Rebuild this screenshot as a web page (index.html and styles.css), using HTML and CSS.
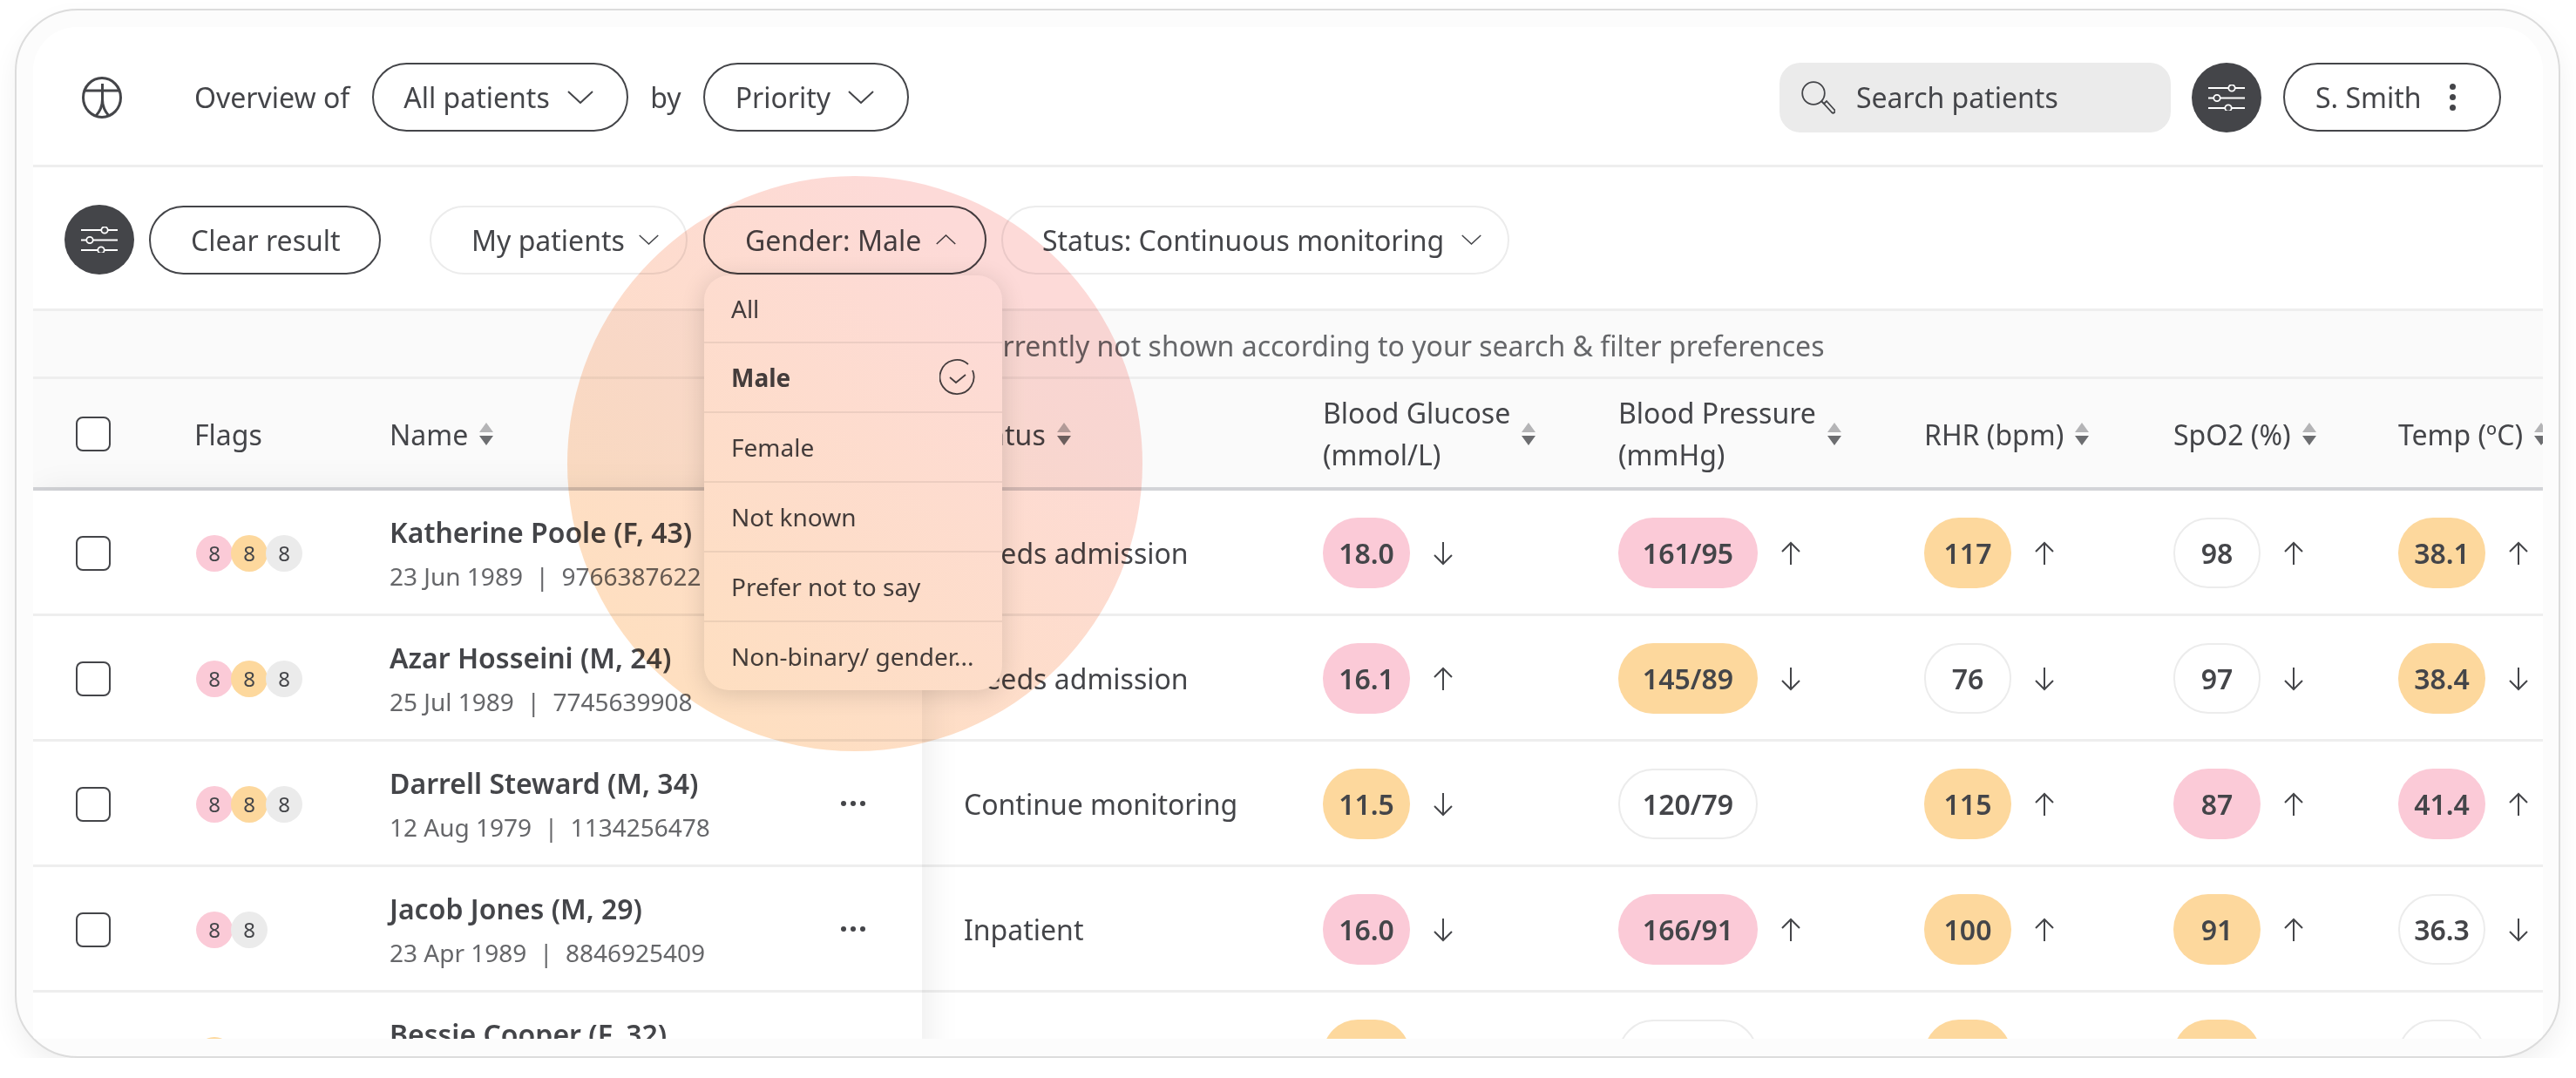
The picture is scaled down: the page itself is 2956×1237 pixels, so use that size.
FILE: index.html
```html
<!DOCTYPE html>
<html>
<head>
	<meta charset="UTF-8">
	<title>Overview</title>
	<link rel="stylesheet" href="styles.css">
</head>
<body>
	<svg class="defs" width="0" height="0">
		<symbol id="sliders" viewBox="0 0 42 30">
			<path d="M0 4h23M31 4h11M0 15.500h6M14 15.500h28M0 27h19M27 27h15" fill="none" stroke="#fff" stroke-width="1.800"/>
			<circle cx="27" cy="4" r="3.700" fill="none" stroke="#fff" stroke-width="1.800"/>
			<circle cx="10" cy="15.500" r="3.700" fill="none" stroke="#fff" stroke-width="1.800"/>
			<circle cx="23" cy="27" r="3.700" fill="none" stroke="#fff" stroke-width="1.800"/>
		</symbol>
		<symbol id="chev" viewBox="0 0 30 15">
			<path d="M1 1l14 13L29 1" fill="none" stroke="#444549" stroke-width="2"/>
		</symbol>
		<symbol id="up" viewBox="0 0 24 28">
			<path d="M12 27V2M2 12L12 2l10 10" fill="none" stroke="#444549" stroke-width="2"/>
		</symbol>
		<symbol id="down" viewBox="0 0 24 28">
			<path d="M12 1v25M2 16l10 10 10-10" fill="none" stroke="#444549" stroke-width="2"/>
		</symbol>
		<symbol id="sort" viewBox="0 0 16 26">
			<path d="M8 0l8 11H0z" fill="#b4b4b6"/>
			<path d="M0 15h16l-8 11z" fill="#6c6d70"/>
		</symbol>
	</svg>

	<div class="card">
		<div class="inner">
			<div class="topbar">
				<svg class="logo" viewBox="0 0 46 48">
					<ellipse cx="23" cy="24" rx="21.500" ry="22.500" fill="none" stroke="#444549" stroke-width="3"/>
					<path d="M23.500 8v18M2 16h42M23.500 26c0 8-3 14-7.500 19M23.500 26c0 8 3 14 7.500 19" fill="none" stroke="#444549" stroke-width="3"/>
				</svg>
				<span class="label overview">Overview of</span>
				<div class="pill pill-all">All patients <svg class="chev-lg"><use href="#chev"/></svg></div>
				<span class="label by">by</span>
				<div class="pill pill-priority">Priority <svg class="chev-lg"><use href="#chev"/></svg></div>
				<div class="search">
					<svg class="search-icon" viewBox="0 0 40 40">
						<circle cx="15" cy="15" r="12.800" fill="none" stroke="#444549" stroke-width="1.800"/>
						<path d="M24 24l3 3" fill="none" stroke="#444549" stroke-width="1.800"/>
						<path d="M27 27l3-3 9 10a2 2 0 0 1-3 3z" fill="none" stroke="#444549" stroke-width="1.800"/>
					</svg>
					Search patients
				</div>
				<div class="round"><svg class="sliders"><use href="#sliders"/></svg></div>
				<div class="pill pill-user">S. Smith
					<span class="dots"><i></i><i></i><i></i></span>
				</div>
			</div>

			<div class="filters">
				<div class="round"><svg class="sliders"><use href="#sliders"/></svg></div>
				<div class="pill pill-clear">Clear result</div>
				<div class="pill pill-light pill-mine">My patients <svg class="chev-sm"><use href="#chev"/></svg></div>
				<div class="pill pill-gender">Gender: Male <svg class="chev-sm chev-flip"><use href="#chev"/></svg></div>
				<div class="pill pill-light pill-status">Status: Continuous monitoring <svg class="chev-sm"><use href="#chev"/></svg></div>
			</div>

			<div class="notice">12 patients currently not shown according to your search &amp; filter preferences</div>

			<div class="table">
				<div class="cols head">
					<div><span class="check"></span></div>
					<div>Flags</div>
					<div class="th">Name <svg class="sort"><use href="#sort"/></svg></div>
					<div class="th">Status <svg class="sort"><use href="#sort"/></svg></div>
					<div class="th"><span class="two">Blood Glucose<br>(mmol/L)</span> <svg class="sort"><use href="#sort"/></svg></div>
					<div class="th"><span class="two">Blood Pressure<br>(mmHg)</span> <svg class="sort"><use href="#sort"/></svg></div>
					<div class="th">RHR (bpm) <svg class="sort"><use href="#sort"/></svg></div>
					<div class="th">SpO2 (%) <svg class="sort"><use href="#sort"/></svg></div>
					<div class="th">Temp (ºC) <svg class="sort"><use href="#sort"/></svg></div>
				</div>

				<div class="cols row">
					<div><span class="check"></span></div>
					<div class="flags"><b class="pink">8</b><b class="orange">8</b><b class="grey">8</b></div>
					<div class="who"><strong>Katherine Poole (F, 43)</strong><small>23 Jun 1989 &nbsp;|&nbsp; 9766387622</small></div>
					<div>Needs admission</div>
					<div class="val"><b class="chip pink">18.0</b><svg class="arrow"><use href="#down"/></svg></div>
					<div class="val"><b class="chip wide pink">161/95</b><svg class="arrow"><use href="#up"/></svg></div>
					<div class="val"><b class="chip orange">117</b><svg class="arrow"><use href="#up"/></svg></div>
					<div class="val"><b class="chip white">98</b><svg class="arrow"><use href="#up"/></svg></div>
					<div class="val"><b class="chip orange">38.1</b><svg class="arrow"><use href="#up"/></svg></div>
				</div>

				<div class="cols row">
					<div><span class="check"></span></div>
					<div class="flags"><b class="pink">8</b><b class="orange">8</b><b class="grey">8</b></div>
					<div class="who"><strong>Azar Hosseini (M, 24)</strong><small>25 Jul 1989 &nbsp;|&nbsp; 7745639908</small></div>
					<div>Needs admission</div>
					<div class="val"><b class="chip pink">16.1</b><svg class="arrow"><use href="#up"/></svg></div>
					<div class="val"><b class="chip wide orange">145/89</b><svg class="arrow"><use href="#down"/></svg></div>
					<div class="val"><b class="chip white">76</b><svg class="arrow"><use href="#down"/></svg></div>
					<div class="val"><b class="chip white">97</b><svg class="arrow"><use href="#down"/></svg></div>
					<div class="val"><b class="chip orange">38.4</b><svg class="arrow"><use href="#down"/></svg></div>
				</div>

				<div class="cols row">
					<div><span class="check"></span></div>
					<div class="flags"><b class="pink">8</b><b class="orange">8</b><b class="grey">8</b></div>
					<div class="who"><strong>Darrell Steward (M, 34)</strong><small>12 Aug 1979 &nbsp;|&nbsp; 1134256478</small><span class="more-dots"><i></i><i></i><i></i></span></div>
					<div>Continue monitoring</div>
					<div class="val"><b class="chip orange">11.5</b><svg class="arrow"><use href="#down"/></svg></div>
					<div class="val"><b class="chip wide white">120/79</b></div>
					<div class="val"><b class="chip orange">115</b><svg class="arrow"><use href="#up"/></svg></div>
					<div class="val"><b class="chip pink">87</b><svg class="arrow"><use href="#up"/></svg></div>
					<div class="val"><b class="chip pink">41.4</b><svg class="arrow"><use href="#up"/></svg></div>
				</div>

				<div class="cols row">
					<div><span class="check"></span></div>
					<div class="flags"><b class="pink">8</b><b class="grey">8</b></div>
					<div class="who"><strong>Jacob Jones (M, 29)</strong><small>23 Apr 1989 &nbsp;|&nbsp; 8846925409</small><span class="more-dots"><i></i><i></i><i></i></span></div>
					<div>Inpatient</div>
					<div class="val"><b class="chip pink">16.0</b><svg class="arrow"><use href="#down"/></svg></div>
					<div class="val"><b class="chip wide pink">166/91</b><svg class="arrow"><use href="#up"/></svg></div>
					<div class="val"><b class="chip orange">100</b><svg class="arrow"><use href="#up"/></svg></div>
					<div class="val"><b class="chip orange">91</b><svg class="arrow"><use href="#up"/></svg></div>
					<div class="val"><b class="chip white">36.3</b><svg class="arrow"><use href="#down"/></svg></div>
				</div>

				<!-- only the top of this row shows above the fold -->
				<div class="cols row">
					<div></div>
					<div class="flags"><b class="orange"></b></div>
					<div class="who"><strong>Bessie Cooper (F, 32)</strong><small>&nbsp;</small></div>
					<div></div>
					<div class="val"><b class="chip orange"></b></div>
					<div class="val"><b class="chip wide white"></b></div>
					<div class="val"><b class="chip orange"></b></div>
					<div class="val"><b class="chip orange"></b></div>
					<div class="val"><b class="chip white"></b></div>
				</div>

				<div class="frozen"></div>
			</div>

			<ul class="menu">
				<li>All</li>
				<li class="picked">Male
					<svg class="tick" viewBox="0 0 42 42">
						<path d="M33 6A19.500 19.500 0 1 0 38 13" fill="none" stroke="#444549" stroke-width="1.800"/>
						<path d="M12 21l7 6 11-9" fill="none" stroke="#444549" stroke-width="1.800"/>
					</svg>
				</li>
				<li>Female</li>
				<li>Not known</li>
				<li>Prefer not to say</li>
				<li>Non-binary/ gender...</li>
			</ul>
		</div>
		<div class="blob"></div>
	</div>
</body>
</html>
```

FILE: styles.css
```css
* {
	box-sizing: border-box;
}
body {
	margin: 0;
	background-color: #fff;
	font-family: "Noto Sans", sans-serif;
	font-size: 32px;
	color: #444549;
}
.defs {
	position: absolute;
}
.card {
	position: relative;
	width: 2921px;
	height: 1204px;
	margin: 10px 18px 0 17px;
	padding: 19px 18px 20px 19px;
	background-color: #fcfcfc;
	border: 2px solid #dcdcdc;
	border-radius: 72px;
	box-shadow: 0 14px 30px rgba(0, 0, 0, 0.06);
	overflow: hidden;
}
.inner {
	position: relative;
	height: 100%;
	background-color: #fff;
	border-radius: 50px 50px 0 0;
	overflow: hidden;
}

/* top bar */
.topbar {
	display: flex;
	align-items: center;
	height: 161px;
	padding: 3px 48px 0 56px;
	border-bottom: 3px solid #eeeeee;
}
.logo {
	width: 46px;
	height: 48px;
	margin-right: 83px;
}
.overview {
	margin-right: 26px;
}
.by {
	margin: 0 25px;
}
.pill {
	display: flex;
	align-items: center;
	height: 79px;
	border: 2px solid #444549;
	border-radius: 40px;
	white-space: nowrap;
}
.pill-light {
	border-color: #ececec;
}
.pill-all {
	width: 294px;
	padding-left: 34px;
	gap: 20px;
}
.pill-priority {
	width: 236px;
	padding-left: 35px;
	gap: 20px;
}
.search {
	display: flex;
	align-items: center;
	width: 449px;
	height: 80px;
	margin-left: auto;
	padding-left: 24px;
	background-color: #ebebeb;
	border-radius: 24px;
	white-space: nowrap;
}
.search-icon {
	width: 40px;
	height: 40px;
	margin-right: 24px;
}
.round {
	display: flex;
	align-items: center;
	justify-content: center;
	flex: none;
	width: 80px;
	height: 80px;
	background-color: #444549;
	border-radius: 50%;
}
.topbar .round {
	margin: 0 25px 0 24px;
}
.sliders {
	width: 42px;
	height: 30px;
}
.pill-user {
	width: 250px;
	padding-left: 35px;
}
.dots {
	display: flex;
	flex-direction: column;
	gap: 5px;
	margin-left: 32px;
}
.dots i {
	width: 7px;
	height: 7px;
	background-color: #444549;
	border-radius: 50%;
}
.chev-lg {
	width: 30px;
	height: 15px;
}
.chev-sm {
	width: 23px;
	height: 12px;
}
.chev-flip {
	transform: scaleY(-1);
}

/* filter row */
.filters {
	display: flex;
	align-items: center;
	height: 165px;
	padding: 4px 0 0 36px;
	border-bottom: 3px solid #eeeeee;
}
.pill-clear {
	width: 266px;
	margin: 0 56px 0 17px;
	padding-left: 46px;
}
.pill-mine {
	width: 296px;
	padding-left: 46px;
	gap: 16px;
}
.pill-gender {
	width: 325px;
	margin: 0 17px 0 18px;
	padding-left: 46px;
	gap: 17px;
}
.pill-status {
	width: 583px;
	padding-left: 45px;
	gap: 20px;
}
.notice {
	height: 78px;
	padding-left: 902px;
	background-color: #fafafa;
	border-bottom: 3px solid #eeeeee;
	line-height: 80px;
	color: #66676a;
	white-space: nowrap;
}

/* table */
.table {
	position: relative;
}
.cols {
	display: grid;
	grid-template-columns: 136px 224px 659px 412px 339px 351px 286px 258px 166px;
	align-items: center;
	padding-left: 49px;
	white-space: nowrap;
}
.head {
	height: 128px;
	padding-top: 2px;
	background-color: #fafafa;
	border-bottom: 4px solid #d3d4d8;
}
.th {
	display: flex;
	align-items: center;
	gap: 13px;
}
.two {
	line-height: 48px;
}
.sort {
	flex: none;
	width: 16px;
	height: 26px;
}
.row {
	height: 144px;
	padding-top: 2px;
	border-bottom: 3px solid #eeeeee;
}
.check {
	display: block;
	width: 40px;
	height: 40px;
	background-color: #fff;
	border: 2px solid #444549;
	border-radius: 8px;
}
.flags {
	display: flex;
	padding-left: 2px;
}
.flags b {
	display: flex;
	align-items: center;
	justify-content: center;
	width: 42px;
	height: 42px;
	margin-right: -2px;
	border-radius: 50%;
	font-size: 24px;
	font-weight: 400;
}
.who {
	position: relative;
}
.who strong {
	display: block;
	font-weight: 600;
	line-height: 48px;
}
.who small {
	display: block;
	margin-top: 4px;
	font-size: 28px;
	line-height: 44px;
	color: #66676a;
}
.more-dots {
	position: absolute;
	top: 44px;
	left: 518px;
	display: flex;
	gap: 5px;
}
.more-dots i {
	width: 6px;
	height: 6px;
	background-color: #444549;
	border-radius: 50%;
}
.val {
	display: flex;
	align-items: center;
}
.chip {
	display: flex;
	align-items: center;
	justify-content: center;
	flex: none;
	width: 100px;
	height: 81px;
	border-radius: 40px;
	font-weight: 600;
}
.wide {
	width: 160px;
}
.arrow {
	flex: none;
	width: 24px;
	height: 28px;
	margin-left: 26px;
}
.pink {
	background-color: #fbcad7;
}
.orange {
	background-color: #fdd89d;
}
.grey {
	background-color: #ebebeb;
}
.white {
	background-color: #fff;
	border: 2px solid #ececec;
}

/* shadow of the frozen columns */
.frozen {
	position: absolute;
	top: 128px;
	bottom: 0;
	left: 0;
	width: 1020px;
	box-shadow: 8px 0 36px rgba(0, 0, 0, 0.07);
}

/* open gender dropdown */
.menu {
	position: absolute;
	top: 285px;
	left: 770px;
	width: 342px;
	margin: 0;
	padding: 0;
	list-style: none;
	background-color: #fff;
	border-radius: 28px;
	box-shadow: 0 4px 28px rgba(0, 0, 0, 0.14);
	font-size: 28px;
	white-space: nowrap;
}
.menu li {
	display: flex;
	align-items: center;
	justify-content: space-between;
	height: 80px;
	padding: 0 31px;
	border-top: 2px solid #eeeeee;
}
.menu li:first-child {
	height: 76px;
	border-top: none;
}
.picked {
	font-weight: 700;
}
.tick {
	width: 42px;
	height: 42px;
	margin-right: -1px;
}

/* highlight circle */
.blob {
	position: absolute;
	top: 190px;
	left: 632px;
	width: 660px;
	height: 660px;
	background-image: linear-gradient(40deg, #fedfc0 15%, #fddad8 80%);
	border-radius: 50%;
	mix-blend-mode: multiply;
}
```
